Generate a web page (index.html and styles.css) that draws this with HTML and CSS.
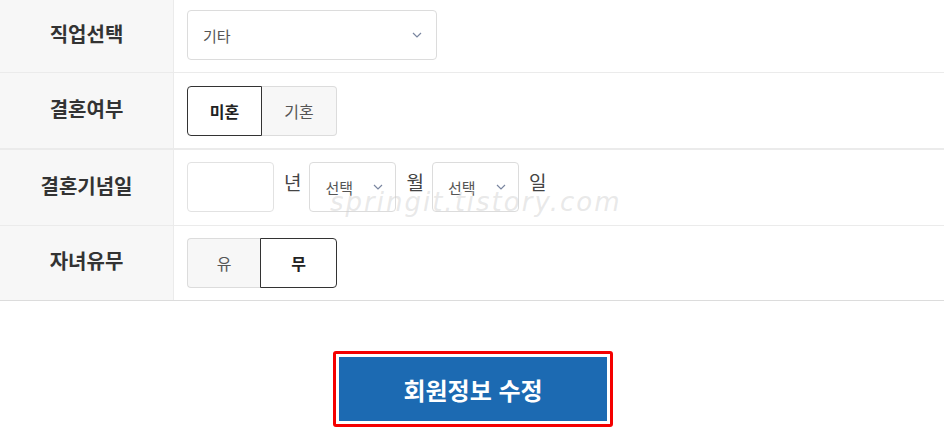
FILE: index.html
```html
<!DOCTYPE html>
<html lang="ko">
<head>
<meta charset="UTF-8">
<title>회원정보 수정</title>
<link rel="stylesheet" href="styles.css">
</head>
<body>
<div class="page">
  <div class="form-table">
    <div class="row row-first">
      <div class="label">직업선택</div>
      <div class="field">
        <div class="select select-wide">
          <span>기타</span>
          <svg class="chev" width="10" height="6" viewBox="0 0 10 6"><path d="M1 1l4 4 4-4" fill="none" stroke="#7a86a0" stroke-width="1.2"/></svg>
        </div>
      </div>
    </div>
    <div class="row row-second">
      <div class="label">결혼여부</div>
      <div class="field">
        <div class="toggle">
          <span class="opt on">미혼</span>
          <span class="opt">기혼</span>
        </div>
      </div>
    </div>
    <div class="row">
      <div class="label">결혼기념일</div>
      <div class="field">
        <div class="text-input"></div>
        <span class="unit">년</span>
        <div class="select select-small">
          <span>선택</span>
          <svg class="chev" width="10" height="6" viewBox="0 0 10 6"><path d="M1 1l4 4 4-4" fill="none" stroke="#7a86a0" stroke-width="1.2"/></svg>
        </div>
        <span class="unit">월</span>
        <div class="select select-small">
          <span>선택</span>
          <svg class="chev" width="10" height="6" viewBox="0 0 10 6"><path d="M1 1l4 4 4-4" fill="none" stroke="#7a86a0" stroke-width="1.2"/></svg>
        </div>
        <span class="unit">일</span>
      </div>
    </div>
    <div class="row row-last">
      <div class="label">자녀유무</div>
      <div class="field">
        <div class="toggle toggle-child">
          <span class="opt">유</span>
          <span class="opt on">무</span>
        </div>
      </div>
    </div>
    <div class="watermark">springit.tistory.com</div>
  </div>

  <div class="submit-wrap">
    <div class="highlight">
      <button class="submit">회원정보 수정</button>
    </div>
  </div>
</div>
</body>
</html>
```

FILE: styles.css
```css
body {
  margin: 0;
  background-color: #fff;
  font-family: 'Noto Sans CJK KR', 'Noto Sans', sans-serif;
  color: #333;
}

.page {
  width: 944px;
  height: 432px;
  overflow: hidden;
}

.form-table {
  position: relative;
  border-bottom: 1px solid #dcdcdc;
}

.row {
  display: flex;
  border-bottom: 1px solid #ebebeb;
}

.row-last {
  border-bottom: none;
}

.row-second {
  border-bottom: 2px solid #ebebeb;
}

.label {
  width: 174px;
  flex-shrink: 0;
  box-sizing: border-box;
  padding-bottom: 5px;
  background-color: #f7f7f7;
  border-right: 1px solid #ebebeb;
  display: flex;
  align-items: center;
  justify-content: center;
  font-size: 20px;
  font-weight: bold;
  color: #333;
}

.field {
  flex: 1;
  display: flex;
  align-items: center;
  padding: 12px 13px 13px;
}

.row-first .field {
  padding-top: 10px;
  padding-bottom: 12px;
}

.row-second .field {
  padding-top: 13px;
  padding-bottom: 12px;
}

.row-last .field {
  padding-bottom: 12px;
}

.select {
  height: 50px;
  box-sizing: border-box;
  border: 1px solid #dcdcdc;
  border-radius: 4px;
  display: flex;
  align-items: center;
  justify-content: space-between;
  font-size: 15px;
  color: #555;
  background-color: #fff;
}

.select-wide {
  width: 250px;
  padding: 0 14px 0 15px;
}

.select-small {
  width: 87px;
  padding: 0 12px 0 15px;
}

.chev {
  display: block;
}

.text-input {
  width: 87px;
  height: 50px;
  box-sizing: border-box;
  border: 1px solid #e2e2e2;
  border-radius: 4px;
}

.unit {
  font-size: 19px;
  color: #444;
  padding: 0 8px 12px 10px;
}

.toggle {
  display: flex;
}

.opt {
  width: 75px;
  height: 50px;
  box-sizing: border-box;
  display: flex;
  align-items: center;
  justify-content: center;
  font-size: 16px;
  color: #555;
  background-color: #f7f7f7;
  border: 1px solid #dcdcdc;
}

.opt:first-child {
  border-radius: 4px 0 0 4px;
  border-right: none;
}

.opt:last-child {
  border-radius: 0 4px 4px 0;
  border-left: none;
}

.opt.on {
  background-color: #fff;
  border: 1px solid #333;
  color: #222;
  font-weight: bold;
}

.toggle-child .opt:first-child {
  width: 73px;
}

.toggle-child .opt:last-child {
  width: 77px;
}

.watermark {
  position: absolute;
  left: 330px;
  top: 187px;
  font-family: 'DejaVu Sans', sans-serif;
  font-style: italic;
  font-size: 26px;
  letter-spacing: 2px;
  color: rgba(205, 205, 205, 0.45);
  pointer-events: none;
}

.submit-wrap {
  display: flex;
  justify-content: center;
  padding-top: 50px;
}

.highlight {
  border: 3px solid #f40000;
  border-radius: 3px;
  padding: 3px;
  margin-left: 2px;
}

.submit {
  display: block;
  width: 268px;
  height: 64px;
  border: none;
  background-color: #1c6ab2;
  color: #fff;
  font-family: 'Noto Sans CJK KR', sans-serif;
  font-size: 24px;
  font-weight: bold;
  cursor: pointer;
}
```
